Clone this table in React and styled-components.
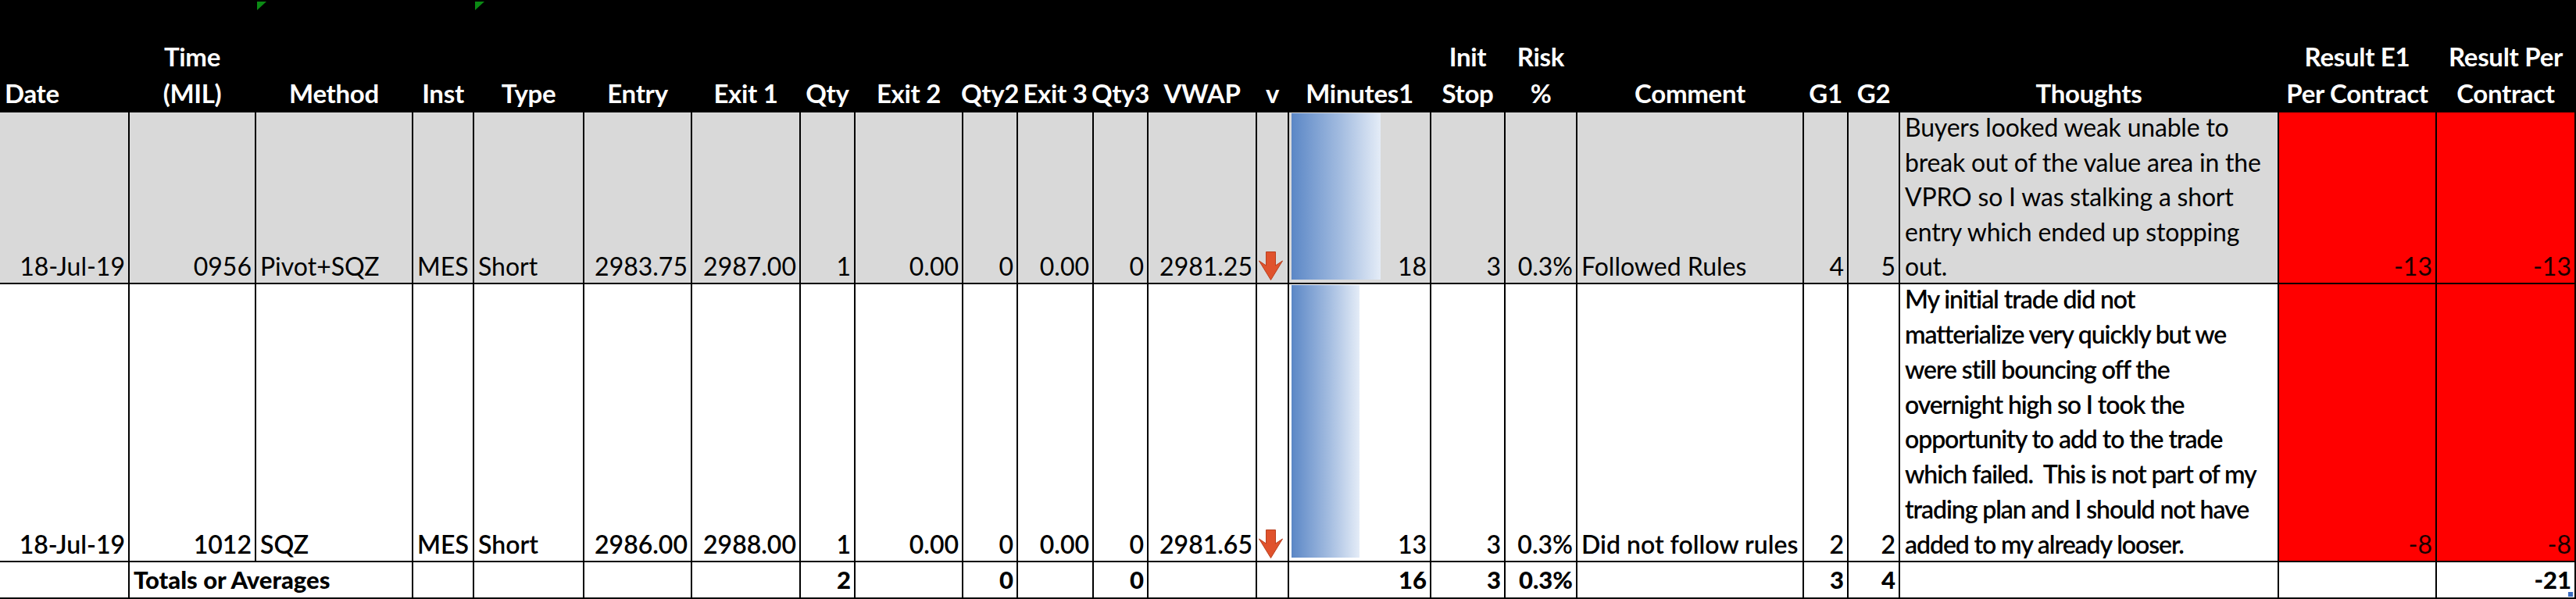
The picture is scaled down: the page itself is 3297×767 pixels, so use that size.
import React from "react";
import styled, { createGlobalStyle } from "styled-components";

const GlobalStyle = createGlobalStyle`
    html, body {
        margin: 0;
        padding: 0;
        background: #fff;
    }
    body {
        font-family: Lato, "Open Sans", sans-serif;
    }
`;

const columns = [
    { key: "date", head: "Date", w: 166, align: "right", headLeft: true },
    { key: "time", head: "Time\n(MIL)", w: 162, align: "right" },
    { key: "method", head: "Method", w: 201, align: "left", mark: true },
    { key: "inst", head: "Inst", w: 78, align: "left" },
    { key: "type", head: "Type", w: 141, align: "left", mark: true },
    { key: "entry", head: "Entry", w: 138 },
    { key: "exit1", head: "Exit 1", w: 139 },
    { key: "qty", head: "Qty", w: 70 },
    { key: "exit2", head: "Exit 2", w: 138 },
    { key: "qty2", head: "Qty2", w: 70 },
    { key: "exit3", head: "Exit 3", w: 97 },
    { key: "qty3", head: "Qty3", w: 70 },
    { key: "vwap", head: "VWAP", w: 139 },
    { key: "dir", head: "v", w: 41, kind: "arrow" },
    { key: "minutes", head: "Minutes1", w: 182, kind: "bar" },
    { key: "stop", head: "Init\nStop", w: 95 },
    { key: "risk", head: "Risk\n%", w: 92 },
    { key: "comment", head: "Comment", w: 290, align: "left" },
    { key: "g1", head: "G1", w: 57 },
    { key: "g2", head: "G2", w: 66 },
    { key: "thoughts", head: "Thoughts", w: 485, kind: "text" },
    { key: "r1", head: "Result E1\nPer Contract", w: 202, kind: "result" },
    { key: "r2", head: "Result Per\nContract", w: 178, kind: "result" },
];

const trades = [
    {
        id: 1,
        bg: "#d9d9d9",
        weight: 400,
        date: "18-Jul-19",
        time: "0956",
        method: "Pivot+SQZ",
        inst: "MES",
        type: "Short",
        entry: "2983.75",
        exit1: "2987.00",
        qty: "1",
        exit2: "0.00",
        qty2: "0",
        exit3: "0.00",
        qty3: "0",
        vwap: "2981.25",
        minutes: 18,
        stop: "3",
        risk: "0.3%",
        comment: "Followed Rules",
        g1: "4",
        g2: "5",
        thoughts: [
            "Buyers looked weak unable to",
            "break out of the value area in the",
            "VPRO so I was stalking a short",
            "entry which ended up stopping",
            "out.",
        ],
        r1: "-13",
        r2: "-13",
    },
    {
        id: 2,
        bg: "#ffffff",
        weight: 600,
        date: "18-Jul-19",
        time: "1012",
        method: "SQZ",
        inst: "MES",
        type: "Short",
        entry: "2986.00",
        exit1: "2988.00",
        qty: "1",
        exit2: "0.00",
        qty2: "0",
        exit3: "0.00",
        qty3: "0",
        vwap: "2981.65",
        minutes: 13,
        stop: "3",
        risk: "0.3%",
        comment: "Did not follow rules",
        g1: "2",
        g2: "2",
        thoughts: [
            "My initial trade did not",
            "matterialize very quickly but we",
            "were still bouncing off the",
            "overnight high so I took the",
            "opportunity to add to the trade",
            "which failed.  This is not part of my",
            "trading plan and I should not have",
            "added to my already looser.",
        ],
        r1: "-8",
        r2: "-8",
    },
];

const totals = {
    qty: "2",
    qty2: "0",
    qty3: "0",
    minutes: "16",
    stop: "3",
    risk: "0.3%",
    g1: "3",
    g2: "4",
    r2: "-21",
};

const Sheet = styled.div`
    display: grid;
    grid-template-columns: ${columns.map((c) => `${c.w - 2}px`).join(" ")};
    grid-template-rows: 142px 218px 354px 45px;
    gap: 2px;
    width: 3297px;
    padding: 0 2px 2px 0;
    box-sizing: border-box;
    background: #000;
    font-family: Lato, "Open Sans", sans-serif;
    font-size: 32px;
    color: #000;
`;

const HeadCell = styled.div`
    position: relative;
    display: flex;
    flex-direction: column;
    justify-content: flex-end;
    align-items: ${(props) => (props.$left ? "flex-start" : "center")};
    padding: 0 ${(props) => (props.$left ? "6px" : "0")};
    background: #000;
    color: #fff;
    font-size: 33px;
    font-weight: 700;
    letter-spacing: -0.3px;
    line-height: 47px;
    text-align: center;
    white-space: pre;
`;

const HeadText = styled.span`
    margin-bottom: -1px;
`;

const CommentMark = styled.span`
    position: absolute;
    top: 2px;
    left: 1px;
    width: 0;
    height: 0;
    border-top: 11px solid #0b8a14;
    border-right: 12px solid transparent;
`;

const Cell = styled.div`
    position: relative;
    display: flex;
    align-items: flex-end;
    justify-content: ${(props) => (props.$align === "left" ? "flex-start" : "flex-end")};
    padding: 0 4px ${(props) => props.$pb}px 5px;
    background: ${(props) => props.$bg};
    font-size: ${(props) => props.$size || 32}px;
    font-weight: ${(props) => props.$weight};
    line-height: 32px;
    white-space: pre;
    grid-column: span ${(props) => props.$span || 1};
`;

const BarCell = styled(Cell)`
    background: linear-gradient(90deg, #5b87c6 0%, #a3bce0 55%, #e4ecf7 100%) 3px 1px /
            ${(props) => props.$bar}px calc(100% - 5px) no-repeat,
        ${(props) => props.$bg};
`;

const ResultCell = styled(Cell)`
    background: #ff0000;
    color: #1c0000;
    font-weight: 400;
`;

const ArrowCell = styled.div`
    display: flex;
    align-items: flex-end;
    padding: 0 0 3px 2px;
    background: ${(props) => props.$bg};
`;

const ThoughtCell = styled.div`
    display: flex;
    flex-direction: column;
    justify-content: space-between;
    padding: 0 4px 2px 6px;
    background: ${(props) => props.$bg};
    font-weight: ${(props) => props.$weight};
    letter-spacing: ${(props) => (props.$weight > 400 ? "-1.1px" : "-0.2px")};
    line-height: 38px;
    white-space: pre;
`;

const FillHandle = styled.span`
    position: absolute;
    right: 2px;
    bottom: 1px;
    width: 6px;
    height: 6px;
    background: #3d6cc0;
`;

const DownArrow = () => (
    <svg width="31" height="37" viewBox="0 0 31 37">
        <polygon
            points="9.5,0.5 21.5,0.5 21.5,18 30.5,12 15.5,36.5 0.5,12 9.5,18"
            fill="#e0522c"
            stroke="#b9401f"
            strokeWidth="1"
            strokeLinejoin="round"
        />
    </svg>
);

// excel data bar: length grows linearly with the minutes value
const barLength = (minutes) => Math.round(17 + minutes * 5.4);

const TradeRow = ({ trade }) =>
    columns.map((col) => {
        const key = `${trade.id}-${col.key}`;
        if (col.kind === "arrow") {
            return (
                <ArrowCell key={key} $bg={trade.bg}>
                    <DownArrow />
                </ArrowCell>
            );
        }
        if (col.kind === "bar") {
            return (
                <BarCell key={key} $bg={trade.bg} $weight={trade.weight} $pb={5} $bar={barLength(trade.minutes)}>
                    {trade.minutes}
                </BarCell>
            );
        }
        if (col.kind === "text") {
            return (
                <ThoughtCell key={key} $bg={trade.bg} $weight={trade.weight}>
                    {trade.thoughts.map((line, i) => (
                        <div key={i}>{line}</div>
                    ))}
                </ThoughtCell>
            );
        }
        if (col.kind === "result") {
            return (
                <ResultCell key={key} $pb={5}>
                    {trade[col.key]}
                </ResultCell>
            );
        }
        return (
            <Cell key={key} $align={col.align} $bg={trade.bg} $weight={trade.weight} $pb={5}>
                {trade[col.key]}
            </Cell>
        );
    });

const TotalsRow = () => {
    const rest = columns.slice(3);
    return (
        <>
            <Cell $bg="#fff" $pb={7} />
            <Cell $bg="#fff" $pb={7} $size={31} $weight={900} $align="left" $span={2}>
                Totals or Averages
            </Cell>
            {rest.map((col) => (
                <Cell key={`tot-${col.key}`} $bg="#fff" $pb={7} $size={31} $weight={900} $align={col.align}>
                    {totals[col.key] || ""}
                    {col.key === "r2" && <FillHandle />}
                </Cell>
            ))}
        </>
    );
};

const App = () => {
    return (
        <>
            <GlobalStyle />
            <Sheet>
                {columns.map((col) => (
                    <HeadCell key={col.key} $left={col.headLeft}>
                        {col.mark && <CommentMark />}
                        <HeadText>{col.head}</HeadText>
                    </HeadCell>
                ))}
                {trades.map((trade) => (
                    <TradeRow key={trade.id} trade={trade} />
                ))}
                <TotalsRow />
            </Sheet>
        </>
    );
};

export default App;
